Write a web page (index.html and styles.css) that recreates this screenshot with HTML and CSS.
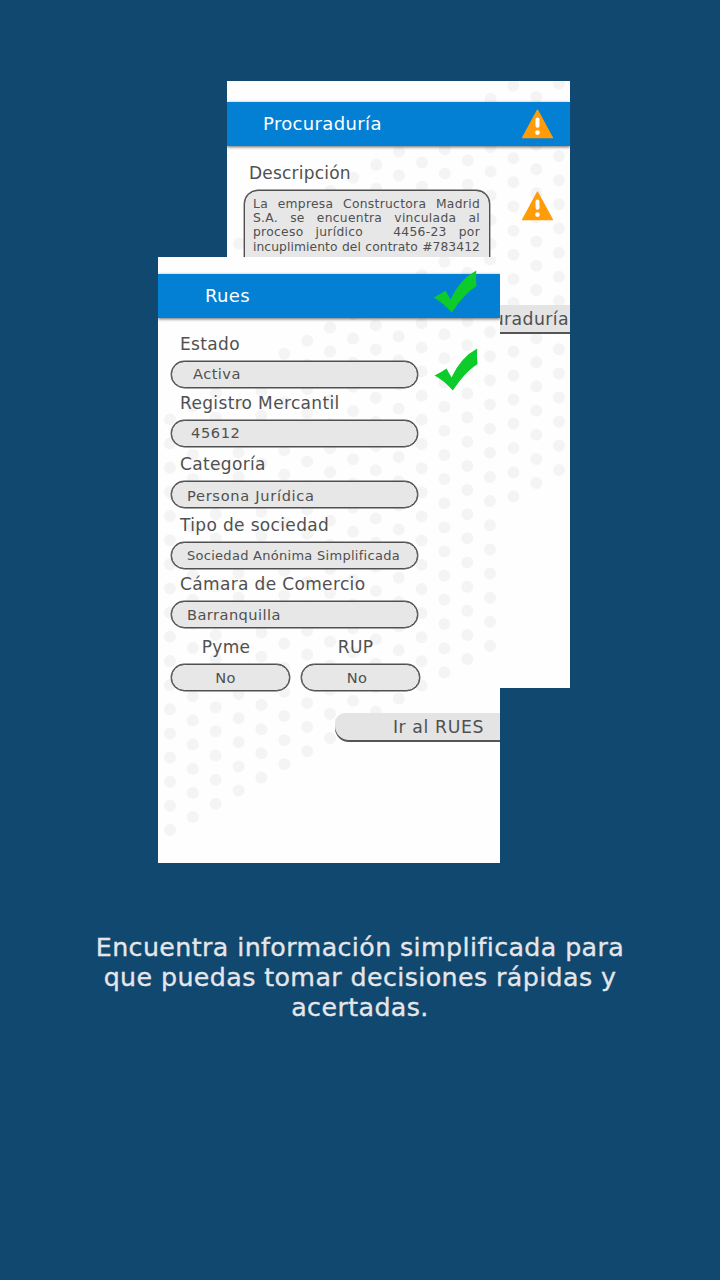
FILE: index.html
```html
<!DOCTYPE html>
<html lang="es">
<head>
<meta charset="utf-8">
<title>Consulta</title>
<link rel="stylesheet" href="styles.css">
</head>
<body>
<svg class="defs" width="0" height="0" aria-hidden="true">
  <symbol id="dots" viewBox="0 0 343 607">
    <path d="M12 573v-411M34.8 560v-411M57.7 546.8v-411M80.6 533.6v-411M103.4 520.5v-411M126.3 507.3v-411M149.2 494.2v-411M172 481v-411M195 467.9v-411M217.8 454.7v-411M240.7 441.6v-411M263.6 428.5v-411M286.4 415.3v-411M309.3 402.1v-411M332 389v-411" fill="none" stroke="#f4f4f4" stroke-width="12" stroke-linecap="round" stroke-dasharray="0 24.15"/>
  </symbol>
  <symbol id="check" viewBox="0 0 44 43">
    <path d="M0.500 27.500Q7 24.500 12.500 20.500L17.500 29.500Q27 9 43.300 0.500Q42.500 8 43.500 16Q31 24 18.800 42.500Q10 32.500 0.500 27.500Z" fill="#0ccb2a"/>
  </symbol>
  <symbol id="warning" viewBox="0 0 32 30">
    <path d="M16 1L31 28.700H1Z" fill="#ff9c07" stroke="#ff9c07" stroke-width="1.200" stroke-linejoin="round"/>
    <path d="M16 10.600v6.200" stroke="#fff" stroke-width="4" stroke-linecap="round"/>
    <circle cx="16" cy="23.600" r="2.300" fill="#fff"/>
  </symbol>
</svg>
<main class="page">
  <div class="scene">
    <section class="card card-back">
      <svg class="dots"><use href="#dots"/></svg>
      <header class="bar bar-back"><h2 class="title">Procuraduría</h2><svg class="warn"><use href="#warning"/></svg></header>
      <div class="desc">
        <div class="desc-main">
          <div class="label">Descripción</div>
          <div class="note">
            <div>La empresa Constructora Madrid</div>
            <div>S.A. se encuentra vinculada al</div>
            <div>proceso jurídico <span class="gap"></span> 4456-23 por</div>
            <div class="tight">incuplimiento del contrato #783412</div>
          </div>
        </div>
        <svg class="warn"><use href="#warning"/></svg>
      </div>
      <div class="action action-back">uraduría</div>
    </section>
    <section class="card card-front">
      <svg class="dots"><use href="#dots"/></svg>
      <header class="bar bar-front"><h2 class="title">Rues</h2><svg class="check"><use href="#check"/></svg></header>
      <div class="form">
        <div class="first-row">
          <div class="field"><div class="label">Estado</div><div class="input v-activa">Activa</div></div>
          <svg class="check"><use href="#check"/></svg>
        </div>
        <div class="field m5"><div class="label">Registro Mercantil</div><div class="input v-num">45612</div></div>
        <div class="field m7"><div class="label">Categoría</div><div class="input v-drop">Persona Jurídica</div></div>
        <div class="field m7"><div class="label">Tipo de sociedad</div><div class="input v-small">Sociedad Anónima Simplificada</div></div>
        <div class="field m5"><div class="label">Cámara de Comercio</div><div class="input">Barranquilla</div></div>
        <div class="pair">
          <div class="half"><div class="label">Pyme</div><div class="input">No</div></div>
          <div class="half"><div class="label">RUP</div><div class="input v-rup">No</div></div>
        </div>
      </div>
      <div class="action action-front">Ir al RUES</div>
    </section>
  </div>
  <p class="caption">Encuentra información simplificada para<br>que puedas tomar decisiones rápidas y<br>acertadas.</p>
</main>
</body>
</html>
```

FILE: styles.css
```css
* { box-sizing: border-box; }
body { margin: 0; background: #10486f; font-family: Verdana, "DejaVu Sans", sans-serif; color: #505050; }
.defs { position: absolute; }
.page { width: 720px; height: 1280px; overflow: hidden; padding-top: 81px; }
.scene { position: relative; height: 782px; }
.card { position: absolute; overflow: hidden; background: #fefefe; height: 607px; }
.card-back { left: 227px; top: 0; width: 343px; }
.card-front { left: 158px; top: 176px; width: 342px; height: 606px; }
.dots { position: absolute; left: 0; top: 0; width: 343px; height: 607px; }
.bar { position: relative; display: flex; justify-content: space-between; align-items: center; background: #0380d3; box-shadow: 0 1px 3px #0009; }
.bar-back { margin-top: 21px; height: 44px; padding: 0 16px 0 36px; }
.bar-front { margin-top: 17px; height: 44px; padding: 0 23px 0 47px; }
.title { margin: 0 0 2px; color: #fff; font-size: 18px; font-weight: 400; letter-spacing: .35px; }
.warn { width: 33px; height: 30px; flex: none; }
.check { width: 44px; height: 43px; flex: none; }
.bar-front .check { margin-top: -9px; }
.label { height: 27px; line-height: 20px; font-size: 17px; letter-spacing: .35px; padding-left: 9px; white-space: nowrap; }
.desc { position: relative; display: flex; justify-content: space-between; padding: 17px 16px 0 17px; }
.desc .warn { margin-top: 28px; }
.desc .label { padding-left: 5px; letter-spacing: .2px; }
.desc-main { width: 246px; }
.note { height: 100px; padding: 6px 9px 0 8px; border: 1px solid #505050; box-shadow: 0 0 0 .4px #505050; border-radius: 14px; background: #e7e7e7; font-size: 12.3px; line-height: 14.2px; letter-spacing: .3px; }
.note div { text-align: justify; text-align-last: justify; white-space: nowrap; }
.note .tight { letter-spacing: .08px; }
.gap { display: inline-block; width: 6px; }
.action { position: relative; height: 29px; line-height: 28px; background: #e4e4e4; box-shadow: inset 0 -2px #555; font-size: 17.3px; letter-spacing: .6px; text-align: right; white-space: nowrap; }
.action-back { margin: 15px 0 0 170px; padding-right: 1px; letter-spacing: .4px; }
.form { position: relative; padding: 16px 0 0 13px; }
.first-row { display: flex; align-items: flex-start; gap: 16px; height: 54px; }
.first-row .check { margin-top: 14px; }
.field { width: 247px; }
.m5 { margin-top: 5px; }
.m7 { margin-top: 7px; }
.input { height: 27px; line-height: 25px; border: 1px solid #505050; box-shadow: 0 0 0 .4px #505050; border-radius: 14px; background: #e7e7e7; padding-left: 15px; font-size: 14.6px; letter-spacing: .45px; white-space: nowrap; }
.v-activa { padding-left: 21px; line-height: 23px; }
.v-num { padding-left: 19px; letter-spacing: .6px; line-height: 23px; }
.v-drop { line-height: 27px; letter-spacing: .7px; }
.v-small { font-size: 13px; letter-spacing: .28px; }
.pair { display: flex; gap: 10.5px; margin-top: 9px; }
.half { width: 119px; text-align: center; }
.half .label { padding: 0; margin-left: -9px; }
.half .input { padding: 0 10px 0 0; text-align: center; }
.half .v-rup { padding: 0 6px 0 0; }
.action-front { margin: 22px 0 0 177px; padding-right: 16px; border-bottom-left-radius: 14px; border-top-left-radius: 10px; }
.caption { margin: 70px 0 0; text-align: center; color: #e4e6ea; font-size: 25.3px; line-height: 30px; letter-spacing: .4px; -webkit-text-stroke: .35px #e4e6ea; }
```
